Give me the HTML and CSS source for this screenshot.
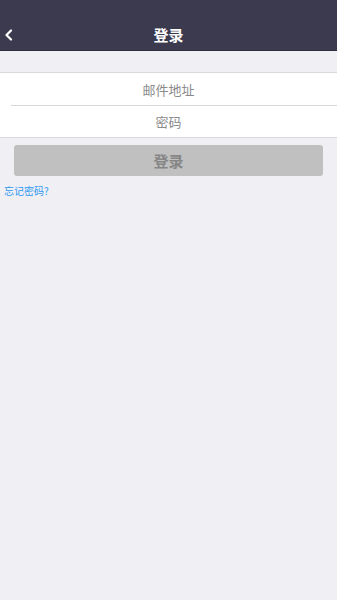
FILE: index.html
```html
<!DOCTYPE html>
<html>
  <head>
    <title>登录</title>
    <link rel="stylesheet" href="styles.css">
  </head>
  <body>
    <div class="nav-bar">
      <a class="back-button" href="#">
        <svg width="10" height="12" viewBox="0 0 10 12"><path d="M7 1.5 L2.5 6 L7 10.5" fill="none" stroke="#fff" stroke-width="2.2" stroke-linecap="round" stroke-linejoin="round"/></svg>
      </a>
      <h1 class="nav-title">登录</h1>
    </div>
    <div class="form-group">
      <div class="form-row"><input class="form-input" type="text" placeholder="邮件地址"></div>
      <div class="form-row"><input class="form-input" type="password" placeholder="密码"></div>
    </div>
    <div class="actions">
      <button class="login-button">登录</button>
    </div>
    <a class="forgot-link" href="#">忘记密码?</a>
  </body>
</html>
```

FILE: styles.css
```css
body {
  margin: 0;
  padding: 0;
  font-family: "Noto Sans CJK SC", "Liberation Sans", sans-serif;
  background-color: #efeff4;
}
.nav-bar {
  position: relative;
  display: flex;
  align-items: center;
  justify-content: center;
  height: 30px;
  padding-top: 20px;
  background-color: #3b3a4f;
  border-bottom: 1px solid #2e2d3d;
}
.back-button {
  position: absolute;
  left: 3px;
  top: 28px;
  display: flex;
  padding: 1px;
}
.nav-title {
  margin: 0;
  font-size: 15px;
  font-weight: bold;
  color: #fff;
  line-height: 30px;
}
.form-group {
  margin-top: 21px;
  background-color: #fff;
  border-top: 1px solid #d9d9dd;
  border-bottom: 1px solid #d9d9dd;
}
.form-row {
  height: 32px;
  margin-left: 11px;
}
.form-row + .form-row {
  border-top: 1px solid #d9d9dd;
  height: 31px;
}
.form-input {
  display: block;
  width: 100%;
  height: 100%;
  box-sizing: border-box;
  border: none;
  outline: none;
  padding: 0 11px 0 0;
  font-family: inherit;
  font-size: 13px;
  text-align: center;
  background: transparent;
}
.form-input::placeholder {
  color: #8a8a8a;
}
.actions {
  padding: 7px 14px 0;
}
.login-button {
  display: block;
  width: 100%;
  height: 31px;
  border: none;
  border-radius: 3px;
  background-color: #c0c0c0;
  color: #868686;
  font-family: inherit;
  font-size: 15px;
  font-weight: bold;
}
.forgot-link {
  display: inline-block;
  margin: 6px 0 0 4px;
  font-size: 10px;
  color: #2e9af0;
  text-decoration: none;
}
```
